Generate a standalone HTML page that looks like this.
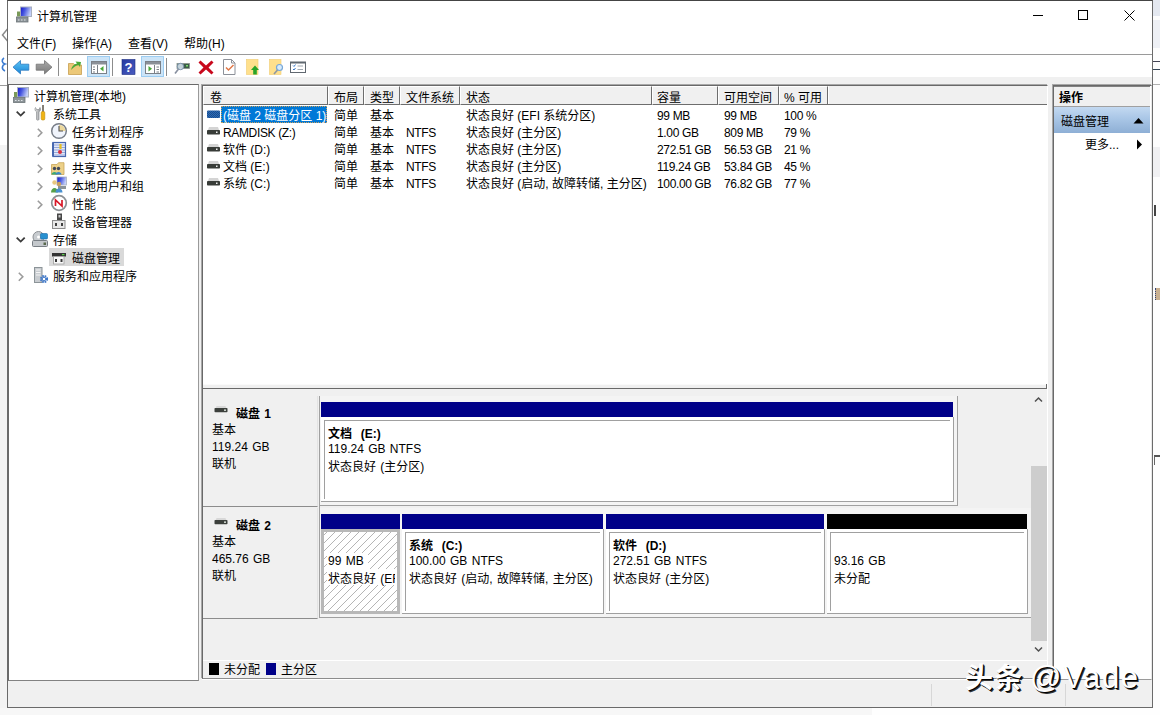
<!DOCTYPE html>
<html lang="zh-CN">
<head>
<meta charset="utf-8">
<title>计算机管理</title>
<style>
*{box-sizing:border-box;margin:0;padding:0}
html,body{width:1160px;height:715px;overflow:hidden;background:#fafafa}
body{position:relative;font-family:"Liberation Sans","Noto Sans CJK SC",sans-serif;font-size:12px;color:#000}
.a{position:absolute}
.t{position:absolute;white-space:pre;line-height:16px;height:16px;font-size:12px}
.b{font-weight:bold}
#win{position:absolute;left:7px;top:0;width:1146px;height:708px;background:#f0f0f0;border:1px solid #6a6a6a;border-top-color:#444}
#title{position:absolute;left:8px;top:1px;width:1144px;height:29px;background:#fff}
#menu{position:absolute;left:8px;top:30px;width:1144px;height:25px;background:#fff;border-bottom:1px solid #9a9a9a}
#tool{position:absolute;left:8px;top:55px;width:1144px;height:22px;background:#fff}
.pane{position:absolute;background:#fff;border:1px solid #828282}
.hc{top:86px;height:19px;border-left:1px solid #fff;border-top:1px solid #fff;border-right:1px solid #6d6d6d;border-bottom:1px solid #6d6d6d}
.hatch{background:#fff repeating-linear-gradient(135deg,transparent 0 4.66px,#a4a4a4 4.66px 5.66px);border:3px solid #b8b8b8}
.d{word-spacing:1px}
.wm{line-height:36px;height:36px;white-space:pre;color:#fff;text-shadow:1px 1px 0 #000,2px 2px 0 rgba(0,0,0,.8)}
.n{letter-spacing:-.35px}
</style>
</head>
<body>
<!-- OUTSIDE -->
<div class="a" style="left:0;top:0;width:7px;height:145px;background:#fff"></div>
<div class="a" style="left:0;top:145px;width:7px;height:570px;background:#f3f3f3"></div>
<div class="a" style="left:0;top:85px;width:7px;height:1px;background:#9a9a9a"></div>
<svg class="a" style="left:0;top:26px" width="8" height="50" viewBox="0 0 8 50"><path d="M7.500 3l-5 6l5 6" fill="none" stroke="#8a8a8a" stroke-width="1.500"/><path d="M4 32c-3 2-2 5 1 6c-3 1-4 5 0 7" fill="none" stroke="#3a7ad0" stroke-width="1.600"/></svg>
<div class="a" style="left:1153px;top:0;width:7px;height:715px;background:#fdfdfd"></div>
<div class="a" style="left:1153px;top:0;width:7px;height:16px;background:#e4e8f0"></div>
<div class="a" style="left:1153px;top:20px;width:7px;height:28px;background:#eef0f5"></div>
<div class="a" style="left:1153px;top:84px;width:7px;height:1px;background:#b0b0b0"></div>
<div class="a" style="left:1153px;top:147px;width:7px;height:30px;background:#f0f0f2"></div>
<div class="a" style="left:1153px;top:61px;width:7px;height:9px;border-top:1px solid #445;border-bottom:1px solid #345"></div>
<div class="a" style="left:1154px;top:205px;width:2px;height:11px;background:#444"></div>
<div class="a" style="left:1155px;top:288px;width:5px;height:12px;border-left:1px dotted #347;background:#c9b090"></div>
<div class="a" style="left:1154px;top:455px;width:6px;height:10px;border-top:2px solid #555;border-left:1px solid #666"></div>
<div class="a" style="left:0;top:708px;width:872px;height:7px;background:#f7f7f7"></div>
<div class="a" style="left:872px;top:708px;width:288px;height:7px;background:#fefefe"></div>
<div id="win"></div>
<div id="title"></div>
<div id="menu"></div>
<div id="tool"></div>

<!-- TITLE -->
<div class="t" style="left:37px;top:9px">计算机管理</div>
<svg class="a" style="left:1025px;top:5px" width="120" height="22" viewBox="0 0 120 22">
  <path d="M8 10.5h10" stroke="#000" stroke-width="1" fill="none"/>
  <rect x="53.5" y="5.5" width="9" height="9" stroke="#000" stroke-width="1" fill="none"/>
  <path d="M99.5 5.5l10 10M109.5 5.5l-10 10" stroke="#000" stroke-width="1" fill="none"/>
</svg>

<svg class="a" style="left:14px;top:5px" width="20" height="20" viewBox="11 85.500 20 20">
  <rect x="17.500" y="87.500" width="11" height="9.500" fill="url(#scr)" stroke="#a8b0c0" stroke-width="1"/>
  <rect x="14" y="92" width="3" height="5" fill="#7a9a58"/>
  <rect x="13.500" y="97.500" width="11.500" height="5" fill="#8c9498" stroke="#6c7478" stroke-width=".8"/>
  <path d="M15 100.500h1.500M18 100.500h1.500M21 100.500h1.500" stroke="#e0e4e8" stroke-width="1"/>
</svg>
<!-- MENU -->
<div class="t" style="left:17px;top:36px">文件(F)</div>
<div class="t" style="left:72px;top:36px">操作(A)</div>
<div class="t" style="left:128px;top:36px">查看(V)</div>
<div class="t" style="left:184px;top:36px">帮助(H)</div>


<!-- TOOLBAR -->
<svg class="a" style="left:0;top:54px" width="320" height="26" viewBox="0 0 320 26">
  <defs>
    <linearGradient id="gb" x1="0" y1="0" x2="0" y2="1"><stop offset="0" stop-color="#5cc4f4"/><stop offset="1" stop-color="#1c86d8"/></linearGradient>
    <linearGradient id="gg" x1="0" y1="0" x2="0" y2="1"><stop offset="0" stop-color="#a8a8a8"/><stop offset="1" stop-color="#7c7c7c"/></linearGradient>
    <linearGradient id="gq" x1="0" y1="0" x2="1" y2="1"><stop offset="0" stop-color="#2438a0"/><stop offset="1" stop-color="#4a5cc0"/></linearGradient>
  </defs>
  <!-- back / forward -->
  <path d="M13 13.200l7.500-6.700v3.700h8.300v6h-8.300v3.700z" fill="url(#gb)" stroke="#2a78c0" stroke-width=".8"/>
  <path d="M52 13.200l-7.500-6.700v3.700h-8.300v6h8.300v3.700z" fill="url(#gg)" stroke="#747474" stroke-width=".8"/>
  <rect x="58" y="4" width="1" height="18" fill="#8c8c8c"/>
  <!-- folder up -->
  <path d="M68.500 9.500h5l1.500 1.500h6.500v9.500h-13z" fill="#ecc878" stroke="#c8a050" stroke-width=".8"/>
  <path d="M71 16c1-4 3-6 6-6.500l-1.500-2l5.500.5l-1 5l-1.500-2c-2.500.5-4.500 2-7.500 5z" fill="#48a838"/>
  <!-- console tree toggle -->
  <rect x="87.500" y="2.500" width="22" height="20" fill="#cce4f7" stroke="#9ccdf2" stroke-width="1"/>
  <rect x="91.500" y="7.500" width="15" height="12" fill="#fff" stroke="#7a8088"/>
  <rect x="92" y="8" width="14" height="2.500" fill="#8a9098"/>
  <rect x="97" y="11" width="1" height="8" fill="#7a8088"/>
  <path d="M93 13h2M93 15.500h2M93 18h2" stroke="#7a8088" stroke-width="1"/>
  <path d="M103.500 12v5.500l-3.500-2.750z" fill="#48a838"/>
  <rect x="112" y="4" width="1" height="18" fill="#8c8c8c"/>
  <!-- help -->
  <rect x="122" y="5.500" width="13" height="15" fill="url(#gq)" stroke="#1c2c80" stroke-width=".6"/>
  <text x="128.500" y="18" font-family="Liberation Sans, sans-serif" font-size="13" font-weight="bold" fill="#fff" text-anchor="middle">?</text>
  <!-- action pane toggle -->
  <rect x="141.500" y="2.500" width="22" height="20" fill="#cce4f7" stroke="#9ccdf2" stroke-width="1"/>
  <rect x="145.500" y="7.500" width="15" height="12" fill="#fff" stroke="#7a8088"/>
  <rect x="146" y="8" width="14" height="2.500" fill="#8a9098"/>
  <rect x="154" y="11" width="1" height="8" fill="#7a8088"/>
  <path d="M156.500 13h2.500M156.500 15.500h2.500M156.500 18h2.500" stroke="#7a8088" stroke-width="1"/>
  <path d="M148.500 12v5.500l3.500-2.750z" fill="#48a838"/>
  <rect x="166" y="4" width="1" height="18" fill="#8c8c8c"/>
  <!-- rescan -->
  <rect x="177" y="9.500" width="12.500" height="5" fill="#3c5c48" stroke="#8a948c" stroke-width=".8"/>
  <rect x="186" y="11" width="2" height="1.500" fill="#7cdc6c"/>
  <circle cx="180.500" cy="12.500" r="3.200" fill="#dce8f4" fill-opacity=".85" stroke="#7890a8" stroke-width="1"/>
  <path d="M178.500 15l-3.500 4.500" stroke="#8890a0" stroke-width="1.600"/>
  <!-- red X -->
  <path d="M200.500 6.500l5.500 5l5.500-5l2 2l-5 5l5 5l-2 2l-5.500-5l-5.500 5l-2-2l5-5l-5-5z" fill="#c8081c"/>
  <!-- doc check -->
  <path d="M223.500 5.500h8l3.500 3.500v11.500h-11.500z" fill="#fff" stroke="#8c9098" stroke-width="1"/>
  <path d="M231.500 5.500v3.500h3.500" fill="none" stroke="#8c9098" stroke-width="1"/>
  <path d="M226 13.500l2.500 2.500l5-5" fill="none" stroke="#e07848" stroke-width="1.500"/>
  <!-- doc up -->
  <rect x="246.500" y="5.500" width="11.500" height="15" fill="#ffe08c" stroke="#f0cc70" stroke-width=".6"/>
  <path d="M255 11.500l4 4.500h-2.200v4.500h-3.600v-4.500h-2.200z" fill="#28a428"/>
  <!-- doc find -->
  <rect x="269.500" y="5.500" width="11.500" height="15" fill="#ffe08c" stroke="#f0cc70" stroke-width=".6"/>
  <circle cx="279.500" cy="13.500" r="3" fill="#d8ecfc" stroke="#78a8d8" stroke-width="1.200"/>
  <path d="M277.500 16l-3.500 4" stroke="#9098a0" stroke-width="1.600"/>
  <!-- checklist -->
  <rect x="290.500" y="8" width="15" height="10.500" fill="#fff" stroke="#606870" stroke-width="1"/>
  <rect x="290.500" y="8" width="15" height="1.500" fill="#606870"/>
  <path d="M293 11.500l1 1l1.500-2M293 15l1 1l1.500-2" fill="none" stroke="#3878c8" stroke-width="1"/>
  <path d="M297.500 12h5.500M297.500 15.500h5.500" stroke="#a0a8b0" stroke-width="1"/>
</svg>

<!-- PANES -->
<div class="pane" id="tree" style="left:8px;top:84px;width:191px;height:597px;border-color:#696969 #9a9a9a #828282 #696969"></div>
<div class="pane" id="list" style="left:202px;top:85px;width:846px;height:594px;border-color:#696969 #fff #8c8c8c #696969;box-shadow:0 1px 0 #fff,-1px -1px 0 #a8a8a8"></div>
<div class="pane" id="actions" style="left:1053px;top:85px;width:99px;height:595px;border-color:#696969 #e8e8e8 #9a9a9a #696969;box-shadow:-1px -1px 0 #a8a8a8"></div>


<!-- TREE -->
<div class="a" style="left:49px;top:248px;width:75px;height:18px;background:#d9d9d9"></div>
<div class="t" style="left:34px;top:89px">计算机管理(本地)</div>
<div class="t" style="left:53px;top:107px">系统工具</div>
<div class="t" style="left:72px;top:125px">任务计划程序</div>
<div class="t" style="left:72px;top:143px">事件查看器</div>
<div class="t" style="left:72px;top:161px">共享文件夹</div>
<div class="t" style="left:72px;top:179px">本地用户和组</div>
<div class="t" style="left:72px;top:197px">性能</div>
<div class="t" style="left:72px;top:215px">设备管理器</div>
<div class="t" style="left:53px;top:233px">存储</div>
<div class="t" style="left:72px;top:251px">磁盘管理</div>
<div class="t" style="left:53px;top:269px">服务和应用程序</div>
<svg class="a" style="left:0;top:84px" width="200" height="210" viewBox="0 84 200 210">
  <defs>
    <linearGradient id="scr" x1="0" y1="0" x2="1" y2="0.300"><stop offset="0" stop-color="#1414c8"/><stop offset=".45" stop-color="#4858e0"/><stop offset="1" stop-color="#c4d0f8"/></linearGradient>
    <linearGradient id="sil" x1="0" y1="0" x2="1" y2="0"><stop offset="0" stop-color="#e8e8e8"/><stop offset="1" stop-color="#8c9094"/></linearGradient>
  </defs>
  <!-- chevrons -->
  <g fill="none" stroke="#3c3c3c" stroke-width="1.800">
    <path d="M16.700 111.600l4 4l4-4"/>
    <path d="M16.700 237.600l4 4l4-4"/>
  </g>
  <g fill="none" stroke="#9c9c9c" stroke-width="1.600">
    <path d="M37.800 128.800l4 4l-4 4"/>
    <path d="M37.800 146.800l4 4l-4 4"/>
    <path d="M37.800 164.800l4 4l-4 4"/>
    <path d="M37.800 182.800l4 4l-4 4"/>
    <path d="M37.800 200.800l4 4l-4 4"/>
    <path d="M18.800 272.800l4 4l-4 4"/>
  </g>
  <!-- root: computer management -->
  <rect x="17.500" y="87.500" width="11" height="9.500" fill="url(#scr)" stroke="#a8b0c0" stroke-width="1"/>
  <rect x="14" y="92" width="3" height="5" fill="#7a9a58"/>
  <rect x="13.500" y="97.500" width="11.500" height="5" fill="#8c9498" stroke="#6c7478" stroke-width=".8"/>
  <path d="M15 100.500h1.500M18 100.500h1.500M21 100.500h1.500" stroke="#e0e4e8" stroke-width="1"/>
  <!-- system tools -->
  <path d="M35.500 107.500c-1 1.500-.5 3.500 1 4.300v7.500c0 1.200 2.500 1.200 2.500 0v-7.500c1.500-.8 2-2.800 1-4.300l-1 2h-2.500z" fill="url(#sil)" stroke="#8c9094" stroke-width=".7"/>
  <path d="M43 105v7" stroke="#50483c" stroke-width="1.400"/>
  <rect x="41.200" y="111.500" width="3.600" height="8.500" rx="1.300" fill="#f0b414" stroke="#c08c08" stroke-width=".6"/>
  <!-- task scheduler (clock) -->
  <circle cx="59" cy="131" r="7.300" fill="#f0f4fc" stroke="#787e88" stroke-width="1.500"/>
  <path d="M59 131v-6.300a6.300 6.300 0 0 1 6.300 6.300z" fill="#ecd89c"/>
  <path d="M59 126v5h4" fill="none" stroke="#505050" stroke-width="1.100"/>
  <!-- event viewer -->
  <rect x="53" y="142.500" width="12.500" height="14" fill="#e4e8f8" stroke="#4868b0" stroke-width="1.200"/>
  <path d="M54 145h11M54 147.500h11M54 150h11M54 152.500h11M54 155h11" stroke="#8098d0" stroke-width=".8"/>
  <rect x="52" y="142.500" width="2" height="14" fill="#4868b0"/>
  <path d="M60.500 144v5" stroke="#e8c020" stroke-width="2.200"/>
  <circle cx="60" cy="152" r="2" fill="#d83040"/>
  <!-- shared folders -->
  <path d="M51.500 164.500h5.500l1.500-1.800h5.500v11.800h-12.500z" fill="#ecd088" stroke="#c8a458" stroke-width=".8"/>
  <circle cx="54.500" cy="168.500" r="1.700" fill="#404858"/><circle cx="58.500" cy="168.500" r="1.700" fill="#404858"/>
  <path d="M51.500 174.500c0-3.500 6-3.500 6 0z" fill="#38a878"/><path d="M55.500 174.500c0-3.500 6-3.500 6 0z" fill="#3888c8"/>
  <!-- local users and groups -->
  <rect x="57" y="177" width="9.500" height="8" fill="url(#scr)" stroke="#a8b0c0" stroke-width=".8"/>
  <rect x="58" y="186" width="8" height="3" fill="#8c9498"/>
  <circle cx="54.500" cy="182.500" r="2.200" fill="#e8c880"/><circle cx="59" cy="184" r="2.200" fill="#c8a060"/>
  <path d="M51 192.500c0-6 7-6 7 0z" fill="#58a048"/><path d="M55.500 192.500c0-5.500 7-5.500 7 0z" fill="#4890d0"/>
  <!-- performance -->
  <circle cx="59" cy="203" r="7.300" fill="#fff" stroke="#8c9094" stroke-width="1.700"/>
  <path d="M55.500 206v-6l6.500 6v-6" fill="none" stroke="#d81828" stroke-width="1.700"/>
  <!-- device manager -->
  <rect x="57" y="213.500" width="5" height="7" fill="#484848"/>
  <rect x="58.500" y="215" width="2" height="2.500" fill="#c8c8c8"/>
  <rect x="52.500" y="220.500" width="12.500" height="8" fill="#e8e8e8" stroke="#8c8c8c" stroke-width="1"/>
  <rect x="55" y="223" width="2" height="3" fill="#404040"/><rect x="61" y="223" width="2" height="3" fill="#404040"/>
  <!-- storage -->
  <circle cx="38.500" cy="237" r="5.500" fill="#c8ccd0" stroke="#8c9094" stroke-width="1"/>
  <circle cx="38.500" cy="237" r="1.500" fill="#fff"/>
  <rect x="40.500" y="233.500" width="7" height="5.500" rx="1" fill="#2890d0" stroke="#1868a8" stroke-width=".6"/>
  <rect x="32.500" y="240.500" width="15" height="6" rx="1" fill="#c4c8cc" stroke="#787e84" stroke-width="1"/>
  <rect x="43.500" y="242.500" width="2.500" height="2.500" fill="#58684c"/>
  <!-- disk management -->
  <rect x="52" y="253" width="14" height="3.500" fill="#343434"/>
  <rect x="62" y="254" width="2.500" height="1.200" fill="#58d048"/>
  <rect x="53.500" y="256.500" width="10.500" height="7.500" fill="#f8f8f8" stroke="#a0a0a0" stroke-width=".8"/>
  <rect x="55" y="259" width="2" height="3" fill="#383838"/><rect x="60.500" y="259" width="2" height="3" fill="#383838"/>
  <!-- services and applications -->
  <rect x="34.500" y="267.500" width="7.500" height="15" fill="#c8ccd0" stroke="#8c9498" stroke-width="1"/>
  <path d="M36 270h4.500M36 272.500h4.500M36 275h4.500" stroke="#f4f4f4" stroke-width="1.200"/>
  <circle cx="44" cy="279" r="3" fill="none" stroke="#4078c8" stroke-width="2.200" stroke-dasharray="1.600 .8"/>
  <circle cx="44" cy="279" r="1.800" fill="#fff" stroke="#4078c8" stroke-width="1"/>
</svg>


<!-- LIST -->
<div class="a" style="left:203px;top:86px;width:844px;height:19px;background:#f0f0f0;border-bottom:1px solid #6d6d6d"></div>
<div class="a hc" style="left:203px;width:125px"></div><div class="t" style="left:210px;top:90px">卷</div>
<div class="a hc" style="left:328px;width:36px"></div><div class="t" style="left:334px;top:90px">布局</div>
<div class="a hc" style="left:364px;width:36px"></div><div class="t" style="left:370px;top:90px">类型</div>
<div class="a hc" style="left:400px;width:60px"></div><div class="t" style="left:406px;top:90px">文件系统</div>
<div class="a hc" style="left:460px;width:192px"></div><div class="t" style="left:466px;top:90px">状态</div>
<div class="a hc" style="left:652px;width:66px"></div><div class="t" style="left:657px;top:90px">容量</div>
<div class="a hc" style="left:718px;width:61px"></div><div class="t" style="left:724px;top:90px">可用空间</div>
<div class="a hc" style="left:779px;width:49px"></div><div class="t" style="left:784px;top:90px">% 可用</div>
<div class="a" style="left:828px;top:86px;width:1px;height:18px;background:#fff"></div>
<div class="a" style="left:221px;top:106px;width:106px;height:17px;background:#0078d7;outline:1px dotted #c8a060;outline-offset:-1px"></div>
<div class="t" style="left:223px;top:108px;color:#fff">(磁盘 2 磁盘分区 1)</div><div class="t" style="left:334px;top:108px">简单</div><div class="t" style="left:370px;top:108px">基本</div><div class="t" style="left:466px;top:108px">状态良好 (EFI 系统分区)</div><div class="t n" style="left:657px;top:108px">99 MB</div><div class="t n" style="left:724px;top:108px">99 MB</div><div class="t n" style="left:784px;top:108px">100 %</div>
<div class="t n" style="left:223px;top:125px">RAMDISK (Z:)</div><div class="t" style="left:334px;top:125px">简单</div><div class="t" style="left:370px;top:125px">基本</div><div class="t n" style="left:406px;top:125px">NTFS</div><div class="t" style="left:466px;top:125px">状态良好 (主分区)</div><div class="t n" style="left:657px;top:125px">1.00 GB</div><div class="t n" style="left:724px;top:125px">809 MB</div><div class="t n" style="left:784px;top:125px">79 %</div>
<div class="t" style="left:223px;top:142px">软件 (D:)</div><div class="t" style="left:334px;top:142px">简单</div><div class="t" style="left:370px;top:142px">基本</div><div class="t n" style="left:406px;top:142px">NTFS</div><div class="t" style="left:466px;top:142px">状态良好 (主分区)</div><div class="t n" style="left:657px;top:142px">272.51 GB</div><div class="t n" style="left:724px;top:142px">56.53 GB</div><div class="t n" style="left:784px;top:142px">21 %</div>
<div class="t" style="left:223px;top:159px">文档 (E:)</div><div class="t" style="left:334px;top:159px">简单</div><div class="t" style="left:370px;top:159px">基本</div><div class="t n" style="left:406px;top:159px">NTFS</div><div class="t" style="left:466px;top:159px">状态良好 (主分区)</div><div class="t n" style="left:657px;top:159px">119.24 GB</div><div class="t n" style="left:724px;top:159px">53.84 GB</div><div class="t n" style="left:784px;top:159px">45 %</div>
<div class="t" style="left:223px;top:176px">系统 (C:)</div><div class="t" style="left:334px;top:176px">简单</div><div class="t" style="left:370px;top:176px">基本</div><div class="t n" style="left:406px;top:176px">NTFS</div><div class="t" style="left:466px;top:176px">状态良好 (启动, 故障转储, 主分区)</div><div class="t n" style="left:657px;top:176px">100.00 GB</div><div class="t n" style="left:724px;top:176px">76.82 GB</div><div class="t n" style="left:784px;top:176px">77 %</div>


<svg class="a" style="left:204px;top:106px" width="18" height="86" viewBox="204 106 18 86">
<defs><pattern id="dz" width="2" height="2" patternUnits="userSpaceOnUse"><rect width="2" height="2" fill="#2a6cb8"/><rect width="1" height="1" fill="#1c4c8c"/><rect x="1" y="1" width="1" height="1" fill="#1c4c8c"/></pattern></defs>
<rect x="207" y="110.500" width="13" height="7.500" rx="1" fill="url(#dz)"/>
<path d="M208 130l1-3h9l1 3z" fill="#d4d4d4"/><rect x="207" y="130" width="13" height="4.500" rx=".8" fill="#383c38"/><rect x="216" y="131.5" width="1.500" height="1.500" fill="#f0f0f0"/>
<path d="M208 147l1-3h9l1 3z" fill="#d4d4d4"/><rect x="207" y="147" width="13" height="4.500" rx=".8" fill="#383c38"/><rect x="216" y="148.5" width="1.500" height="1.500" fill="#f0f0f0"/>
<path d="M208 164l1-3h9l1 3z" fill="#d4d4d4"/><rect x="207" y="164" width="13" height="4.500" rx=".8" fill="#383c38"/><rect x="216" y="165.5" width="1.500" height="1.500" fill="#f0f0f0"/>
<path d="M208 181l1-3h9l1 3z" fill="#d4d4d4"/><rect x="207" y="181" width="13" height="4.500" rx=".8" fill="#383c38"/><rect x="216" y="182.5" width="1.500" height="1.500" fill="#f0f0f0"/>
</svg>
<!-- ACTIONS -->
<div class="a" style="left:1054px;top:86px;width:96px;height:21px;background:#f0f0f0;border-bottom:1px solid #a0a0a0;border-top:1px solid #828282"></div>
<div class="t b" style="left:1059px;top:90px">操作</div>
<div class="a" style="left:1054px;top:107px;width:96px;height:26px;background:linear-gradient(#c3d9f1,#a9c6e6 45%,#8eafd5)"></div>
<div class="t" style="left:1061px;top:114px">磁盘管理</div>
<div class="t" style="left:1085px;top:137px">更多...</div>
<svg class="a" style="left:1130px;top:112px" width="20" height="44" viewBox="0 0 20 44">
  <path d="M3.500 11.500h10l-5-5.500z" fill="#000"/>
  <path d="M7 27.500v10l5-5z" fill="#000"/>
</svg>

<!-- DISKS -->
<div class="a" style="left:203px;top:384px;width:844px;height:4px;background:#f0f0f0"></div>
<div class="a" style="left:203px;top:388px;width:844px;height:1px;background:#696969"></div><div class="a" style="left:1046px;top:384px;width:1px;height:5px;background:#696969"></div><div class="a" style="left:203px;top:384px;width:843px;height:1px;background:#fafafa"></div>
<div class="a" style="left:203px;top:389px;width:844px;height:289px;background:#f0f0f0"></div>
<div class="a" style="left:203px;top:396px;width:115px;height:111px;background:#f0f0f0;border-right:1px solid #e3e3e3;border-bottom:1px solid #8c8c8c"></div>
<div class="t b d" style="left:236px;top:406px">磁盘 1</div>
<div class="t d" style="left:212px;top:422px">基本</div>
<div class="t d" style="left:212px;top:439px">119.24 GB</div>
<div class="t d" style="left:212px;top:456px">联机</div>
<svg class="a" style="left:214px;top:405px" width="14" height="9" viewBox="0 0 14 9"><path d="M1.500 3.500l1-2.500h9l1 2.500z" fill="#d8d8d8"/><rect x="0.500" y="3" width="13" height="4.200" rx=".8" fill="#3c403c"/><rect x="10" y="4.500" width="2" height="1.300" fill="#e8f0e8"/></svg>
<div class="a" style="left:319px;top:396px;width:639px;height:110px;border-left:1px solid #a0a0a0;border-right:1px solid #a0a0a0;border-bottom:1px solid #a0a0a0;background:#f4f4f4"></div>
<div class="a" style="left:321px;top:402px;width:632px;height:15px;background:#000088"></div>
<div class="a" style="left:321px;top:417px;width:633px;height:85px;background:#fff;border-right:1px solid #a0a0a0;border-bottom:1px solid #a0a0a0"></div>
<div class="a" style="left:324px;top:420px;width:626px;height:79px;border-left:1px solid #a0a0a0;border-top:1px solid #a0a0a0"></div>
<div class="t b d" style="left:328px;top:426px">文档  (E:)</div>
<div class="t d" style="left:328px;top:441px">119.24 GB NTFS</div>
<div class="t d" style="left:328px;top:459px">状态良好 (主分区)</div>
<div class="a" style="left:203px;top:508px;width:115px;height:111px;background:#f0f0f0;border-right:1px solid #e3e3e3;border-bottom:1px solid #8c8c8c"></div>
<div class="t b d" style="left:236px;top:518px">磁盘 2</div>
<div class="t d" style="left:212px;top:534px">基本</div>
<div class="t d" style="left:212px;top:551px">465.76 GB</div>
<div class="t d" style="left:212px;top:568px">联机</div>
<svg class="a" style="left:214px;top:517px" width="14" height="9" viewBox="0 0 14 9"><path d="M1.500 3.500l1-2.500h9l1 2.500z" fill="#d8d8d8"/><rect x="0.500" y="3" width="13" height="4.200" rx=".8" fill="#3c403c"/><rect x="10" y="4.500" width="2" height="1.300" fill="#e8f0e8"/></svg>
<div class="a" style="left:319px;top:508px;width:722px;height:110px;border-left:1px solid #a0a0a0;border-right:1px solid #a0a0a0;border-bottom:1px solid #a0a0a0;background:#f4f4f4"></div>
<div class="a" style="left:321px;top:514px;width:79px;height:15px;background:#000088"></div>
<div class="a" style="left:321px;top:529px;width:79px;height:85px;background:#fff;border:3px solid #b8b8b8"></div>
<svg class="a" style="left:324px;top:532px" width="73" height="79" viewBox="0 0 73 79"><defs><pattern id="hp" width="8" height="8" patternUnits="userSpaceOnUse" x="3" y="0"><path d="M-1 1l2-2M-1 9l10-10M7 9l2-2" stroke="#9c9c9c" stroke-width="0.75" fill="none"/></pattern></defs><rect width="73" height="79" fill="url(#hp)"/></svg>
<div class="a" style="left:327px;top:553px;width:41px;height:16px;background:#fff"></div><div class="a" style="left:327px;top:569px;width:70px;height:16px;background:#fff"></div>
<div class="t d" style="left:328px;top:553px">99 MB</div>
<div class="t d" style="left:328px;top:571px;width:67px;overflow:hidden;height:17px">状态良好 (EFI 系统分区)</div>
<div class="a" style="left:402px;top:514px;width:201px;height:15px;background:#000088"></div>
<div class="a" style="left:402px;top:529px;width:202px;height:85px;background:#fff;border-right:1px solid #a0a0a0;border-bottom:1px solid #a0a0a0"></div>
<div class="a" style="left:405px;top:532px;width:195px;height:79px;border-left:1px solid #a0a0a0;border-top:1px solid #a0a0a0"></div>
<div class="t b d" style="left:409px;top:538px">系统  (C:)</div>
<div class="t d" style="left:409px;top:553px">100.00 GB NTFS</div>
<div class="t d" style="left:409px;top:571px">状态良好 (启动, 故障转储, 主分区)</div>
<div class="a" style="left:606px;top:514px;width:218px;height:15px;background:#000088"></div>
<div class="a" style="left:606px;top:529px;width:219px;height:85px;background:#fff;border-right:1px solid #a0a0a0;border-bottom:1px solid #a0a0a0"></div>
<div class="a" style="left:609px;top:532px;width:212px;height:79px;border-left:1px solid #a0a0a0;border-top:1px solid #a0a0a0"></div>
<div class="t b d" style="left:613px;top:538px">软件  (D:)</div>
<div class="t d" style="left:613px;top:553px">272.51 GB NTFS</div>
<div class="t d" style="left:613px;top:571px">状态良好 (主分区)</div>
<div class="a" style="left:827px;top:514px;width:200px;height:15px;background:#000"></div>
<div class="a" style="left:827px;top:529px;width:201px;height:85px;background:#fff;border-right:1px solid #a0a0a0;border-bottom:1px solid #a0a0a0"></div>
<div class="a" style="left:830px;top:532px;width:194px;height:79px;border-left:1px solid #a0a0a0;border-top:1px solid #a0a0a0"></div>
<div class="t d" style="left:834px;top:553px">93.16 GB</div>
<div class="t d" style="left:834px;top:571px">未分配</div>
<div class="a" style="left:1031px;top:390px;width:16px;height:270px;background:#f0f0f0"></div>
<div class="a" style="left:1031px;top:466px;width:16px;height:175px;background:#cdcdcd"></div>
<svg class="a" style="left:1031px;top:390px" width="16" height="270" viewBox="0 0 16 270">
  <path d="M4 11.500l3.500-3.500l3.500 3.500" fill="none" stroke="#505050" stroke-width="1.500"/>
  <path d="M4 257.500l3.500 3.500l3.500-3.500" fill="none" stroke="#505050" stroke-width="1.500"/>
</svg>
<div class="a" style="left:319px;top:396px;width:1px;height:222px;background:#a0a0a0"></div>
<!-- legend -->
<div class="a" style="left:203px;top:660px;width:844px;height:1px;background:#fff"></div>
<div class="a" style="left:209px;top:663px;width:10px;height:12px;background:#000"></div>
<div class="t" style="left:224px;top:662px">未分配</div>
<div class="a" style="left:266px;top:663px;width:10px;height:12px;background:#000088"></div>
<div class="t" style="left:281px;top:662px">主分区</div>

<!-- STATUS -->
<div class="a" style="left:931px;top:684px;width:1px;height:22px;background:#d7d7d7"></div>
<div class="a" style="left:1065px;top:684px;width:1px;height:22px;background:#d7d7d7"></div>


<!-- WATERMARK -->
<div class="a wm" style="left:965px;top:661px;font-size:28px;font-weight:bold;letter-spacing:1.5px">头条</div>
<div class="a wm" style="left:1030px;top:660px;font-size:31px;letter-spacing:1.6px">@Vade</div>
</body>
</html>
